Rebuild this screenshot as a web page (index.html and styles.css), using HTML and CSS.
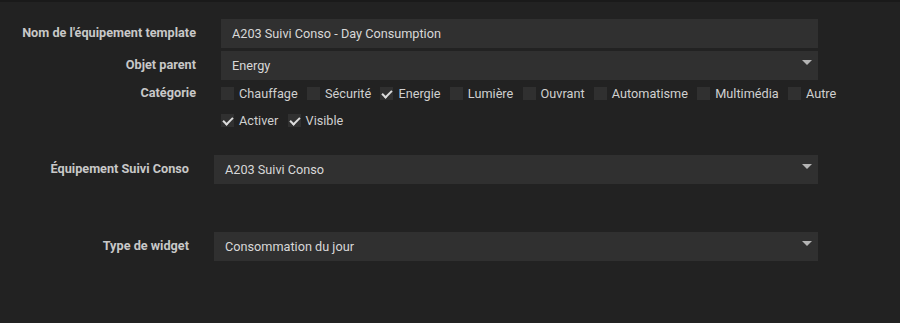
FILE: index.html
```html
<!DOCTYPE html>
<html lang="fr">
<head>
    <meta charset="UTF-8">
    <title>Équipement template</title>
    <link rel="stylesheet" href="styles.css">
</head>
<body>
<div class="topbar"></div>

<!-- Equipment settings -->
<form class="form main">
    <label class="label">Nom de l'équipement template</label>
    <div class="field"><input type="text" class="input" value="A203 Suivi Conso - Day Consumption"></div>

    <label class="label">Objet parent</label>
    <div class="field select">Energy</div>

    <label class="label cat">Catégorie</label>
    <div class="checks">
        <span class="check"><span class="box"></span>Chauffage</span>
        <span class="check"><span class="box"></span>Sécurité</span>
        <span class="check"><span class="box on"></span>Energie</span>
        <span class="check"><span class="box"></span>Lumière</span>
        <span class="check"><span class="box"></span>Ouvrant</span>
        <span class="check"><span class="box"></span>Automatisme</span>
        <span class="check"><span class="box"></span>Multimédia</span>
        <span class="check"><span class="box"></span>Autre</span>
    </div>

    <span></span>
    <div class="checks">
        <span class="check"><span class="box on"></span>Activer</span>
        <span class="check"><span class="box on"></span>Visible</span>
    </div>
</form>

<!-- Plugin settings -->
<form class="form extra">
    <label class="label">Équipement Suivi Conso</label>
    <div class="field select">A203 Suivi Conso</div>

    <label class="label">Type de widget</label>
    <div class="field select">Consommation du jour</div>
</form>
</body>
</html>
```

FILE: styles.css
```css
body {
    margin: 0;
    background-color: #222222;
    font-family: Roboto, "Liberation Sans", sans-serif;
    font-size: 12.7px;
    color: #d0d0d0;
    height: 323px;
    overflow: hidden;
}
.topbar {
    height: 2px;
    background-color: #1a1a1a;
}
.form {
    display: grid;
    align-items: center;
}
.main {
    grid-template-columns: 196px 597px;
    column-gap: 25px;
    margin-top: 17px;
    grid-template-rows: 29px 29px 21px 26px;
    row-gap: 3px;
}
.extra {
    grid-template-columns: 189px 604px;
    column-gap: 25px;
    grid-template-rows: 29px 29px;
    row-gap: 48px;
    margin-top: 22px;
}
.label {
    text-align: right;
    font-weight: bold;
    color: #c8c8c8;
    align-self: center;
    padding-bottom: 2px;
}
.field {
    height: 29px;
    background-color: #303030;
    box-sizing: border-box;
    padding: 0 11px;
    display: flex;
    align-items: center;
    color: #d8d8d8;
}
.input {
    width: 100%;
    background: transparent;
    border: none;
    outline: none;
    padding: 0;
    font-family: inherit;
    font-size: 12.7px;
    color: #d8d8d8;
}
.select {
    position: relative;
}
.select::after {
    content: "";
    position: absolute;
    right: 6px;
    top: 9px;
    border-left: 5.5px solid transparent;
    border-right: 5.5px solid transparent;
    border-top: 5px solid #b4b4b4;
}
.checks {
    display: flex;
    align-items: center;
    white-space: nowrap;
}
.check {
    display: inline-flex;
    align-items: center;
    margin-right: 9.3px;
}
.box {
    width: 13px;
    height: 13px;
    background-color: #303030;
    margin-right: 5px;
    position: relative;
}
.box.on::after {
    content: "";
    position: absolute;
    left: 4px;
    top: 1px;
    width: 4px;
    height: 8px;
    border-right: 2.5px solid #dcdcdc;
    border-bottom: 2.5px solid #dcdcdc;
    transform: rotate(45deg);
}
```
